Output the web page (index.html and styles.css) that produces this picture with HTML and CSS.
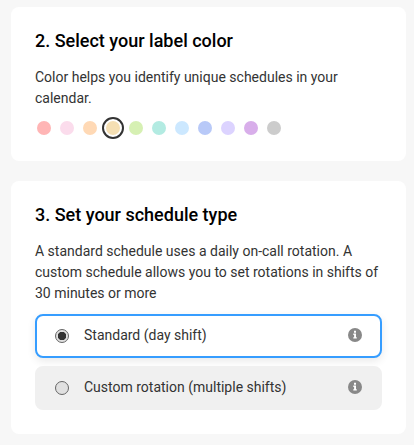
FILE: index.html
```html
<!DOCTYPE html>
<html lang="en">
<head>
  <meta charset="UTF-8">
  <meta name="viewport" content="width=device-width, initial-scale=1.0">
  <link rel="stylesheet" href="styles.css">
  <title>New schedule</title>
</head>
<body>
  <section class="card">
    <h2>2. Select your label color</h2>
    <p>Color helps you identify unique schedules in your calendar.</p>
    <div class="colors">
      <span class="color red"></span>
      <span class="color pink"></span>
      <span class="color orange"></span>
      <span class="color yellow selected"></span>
      <span class="color green"></span>
      <span class="color teal"></span>
      <span class="color sky"></span>
      <span class="color blue"></span>
      <span class="color lavender"></span>
      <span class="color purple"></span>
      <span class="color gray"></span>
    </div>
  </section>

  <section class="card">
    <h2>3. Set your schedule type</h2>
    <p>A standard schedule uses a daily on-call rotation. A custom schedule allows you to set rotations in shifts of 30 minutes or more</p>
    <div class="options">
      <label class="option active">
        <input type="radio" name="type" checked>
        <span class="option-name">Standard (day shift)</span>
        <svg class="info" viewBox="0 0 14 14">
          <circle cx="7" cy="7" r="7"/>
          <path d="M6 2.8h2v1.9H6zM5.3 5.6H8v3.7h.8v1.3H5.3V9.3h.8V6.9h-.8z"/>
        </svg>
      </label>
      <label class="option">
        <input type="radio" name="type">
        <span class="option-name">Custom rotation (multiple shifts)</span>
        <svg class="info" viewBox="0 0 14 14">
          <circle cx="7" cy="7" r="7"/>
          <path d="M6 2.8h2v1.9H6zM5.3 5.6H8v3.7h.8v1.3H5.3V9.3h.8V6.9h-.8z"/>
        </svg>
      </label>
    </div>
  </section>
</body>
</html>
```
FILE: styles.css
```css
body {
  font-family: Roboto, sans-serif;
  background-color: #f7f7f7;
  color: #333;
  margin: 0;
  padding: 7px 8px 11px 11px;
  font-size: 14px;
  line-height: 21px;
}

.card {
  background-color: #fff;
  border-radius: 8px;
  padding: 24px;
  margin-bottom: 20px;
  box-sizing: border-box;
}

.card:last-child {
  margin-bottom: 0;
}

h2 {
  margin: 0 0 16px;
  font-size: 18px;
  font-weight: 500;
  line-height: 20px;
  color: #000;
}

p {
  margin: 0;
}

.colors {
  display: flex;
  gap: 1px;
  margin: 8px 0 -2px -2px;
}

.color {
  padding: 2px;
  border: 2px solid transparent;
  border-radius: 50%;
}

.color::before {
  content: "";
  display: block;
  width: 14px;
  height: 14px;
  border-radius: 50%;
  background-color: currentColor;
}

.selected {
  border-color: #333;
}

.red { color: #ffb5b5; }
.pink { color: #fbdcec; }
.orange { color: #ffd9b5; }
.yellow { color: #f5dfb3; }
.green { color: #d6f0b3; }
.teal { color: #b3ebe2; }
.sky { color: #cce8ff; }
.blue { color: #b8c9f8; }
.lavender { color: #dcd3ff; }
.purple { color: #d8aeea; }
.gray { color: #ccc; }

.options {
  display: flex;
  flex-direction: column;
  gap: 8px;
  margin-top: 10px;
}

.option {
  display: flex;
  align-items: center;
  height: 44px;
  box-sizing: border-box;
  padding: 0 18px;
  border: 2px solid #f0f0f0;
  border-radius: 8px;
  background-color: #f0f0f0;
}

.option.active {
  border-color: #369dff;
  background-color: #fff;
  box-shadow: 0 3px 8px rgba(0, 0, 0, 0.09);
}

input {
  appearance: none;
  width: 14px;
  height: 14px;
  margin: 0 15px 0 0;
  border: 1px solid #666;
  border-radius: 50%;
  background-color: #e0e0e0;
  box-sizing: border-box;
}

input:checked {
  background-image: radial-gradient(circle, #333 4px, transparent 4.5px);
}

.option-name {
  flex: 1;
  margin-bottom: 2px;
}

.info {
  width: 14px;
  height: 14px;
  margin-bottom: 2px;
}

.info circle {
  fill: #888;
}

.info path {
  fill: #fff;
}
```
